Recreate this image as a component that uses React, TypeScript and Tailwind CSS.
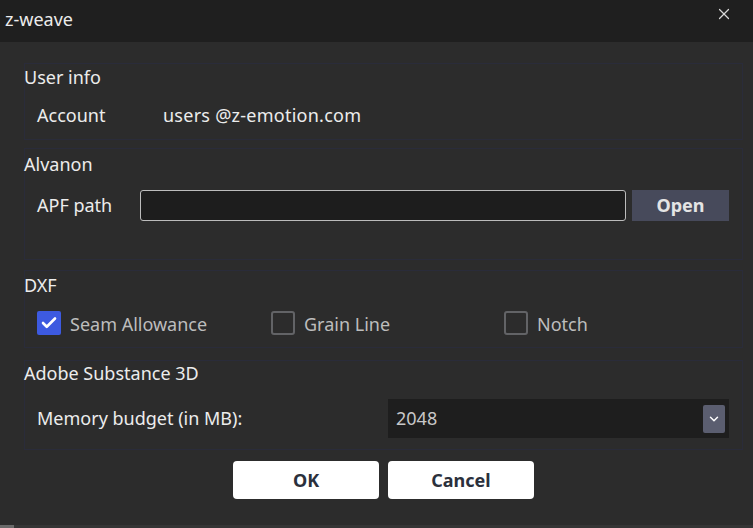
import { Check, ChevronDown, X } from "lucide-react";

const font = { fontFamily: '"Noto Sans", "Open Sans", sans-serif' };

function Group({
  title,
  className,
  children,
}: {
  title: string;
  className: string;
  children: React.ReactNode;
}) {
  return (
    <div className={`flex flex-col border border-[#2a2c3a] ${className}`}>
      <div className="text-[18px] leading-[24px] text-[#ececec] -ml-px">{title}</div>
      {children}
    </div>
  );
}

function CheckItem({ label, checked, width }: { label: string; checked?: boolean; width: string }) {
  return (
    <div className={`flex items-center gap-[9px] ${width}`}>
      {checked ? (
        <div className="w-[24px] h-[24px] bg-[#3d5ae0] rounded-[2px] flex items-center justify-center">
          <Check size={18} strokeWidth={3.5} className="text-white" />
        </div>
      ) : (
        <div className="w-[24px] h-[24px] border-2 border-[#626366] rounded-[3px]" />
      )}
      <span className="text-[18px] leading-[24px] text-[#bdbdbd] mt-[2px]">{label}</span>
    </div>
  );
}

export default function App() {
  return (
    <div className="w-[753px] h-[528px] bg-[#2c2c2c] flex flex-col overflow-hidden" style={font}>
      {/* Title bar */}
      <div className="h-[42px] bg-[#1f1f1f] flex items-center justify-between pl-[5px] pr-[20px] shrink-0">
        <span className="text-[18px] text-[#ececec] -mt-[4px]">z-weave</span>
        <X size={18} strokeWidth={1.6} className="text-[#d8d8d8] -mt-[14px]" />
      </div>

      <div className="flex-1 flex flex-col pl-[24px] pr-[10px] pt-[21px]">
        <Group title="User info" className="h-[77px] pt-[1px]">
          <div className="flex items-center pl-[12px] mt-[14px] h-[24px] text-[18px] text-[#ececec]">
            <span className="w-[126px]">Account</span>
            <span className="tracking-[0.25px]">users @z-emotion.com</span>
          </div>
        </Group>

        <Group title="Alvanon" className="h-[112px] mt-[8px] pt-[3px]">
          <div className="flex items-center pl-[12px] pr-[13px] mt-[14px] h-[31px]">
            <span className="w-[103px] text-[18px] text-[#ececec]">APF path</span>
            <input
              className="flex-1 h-[31px] bg-[#1d1d1d] border border-[#bcbcbc] rounded-[3px] outline-none px-2 text-[#ececec]"
              defaultValue=""
            />
            <button className="ml-[6px] w-[97px] h-[31px] bg-[#474a5b] text-[#e4e4e4] text-[18px] font-bold">
              Open
            </button>
          </div>
        </Group>

        <Group title="DXF" className="h-[78px] mt-[10px] pt-[2px]">
          <div className="flex items-center pl-[12px] mt-[14px] h-[24px]">
            <CheckItem label="Seam Allowance" checked width="w-[234px]" />
            <CheckItem label="Grain Line" width="w-[233px]" />
            <CheckItem label="Notch" width="w-[200px]" />
          </div>
        </Group>

        <Group title="Adobe Substance 3D" className="h-[90px] mt-[12px] pt-[0px]">
          <div className="flex items-center pl-[12px] pr-[13px] mt-[14px] h-[39px]">
            <span className="w-[351px] text-[18px] text-[#ececec]">Memory budget (in MB):</span>
            <div className="flex-1 h-[39px] bg-[#1e1e1e] flex items-center justify-between pl-[8px] pr-[4px]">
              <span className="text-[18px] text-[#c8c8c8]">2048</span>
              <div className="w-[22px] h-[28px] bg-[#5b5e70] rounded-[2px] flex items-center justify-center">
                <ChevronDown size={14} strokeWidth={2.5} className="text-white" />
              </div>
            </div>
          </div>
        </Group>

        <div className="flex justify-center gap-[9px] mt-[11px]">
          <button className="w-[146px] h-[38px] bg-white rounded-[4px] text-[18px] font-bold text-[#2b303c]">
            OK
          </button>
          <button className="w-[146px] h-[38px] bg-white rounded-[4px] text-[18px] font-bold text-[#2b303c]">
            Cancel
          </button>
        </div>
      </div>
      <div className="h-[3px] bg-[#353535] shrink-0 flex">
        <div className="w-[14px] bg-[#6a6a6a]" />
      </div>
    </div>
  );
}
